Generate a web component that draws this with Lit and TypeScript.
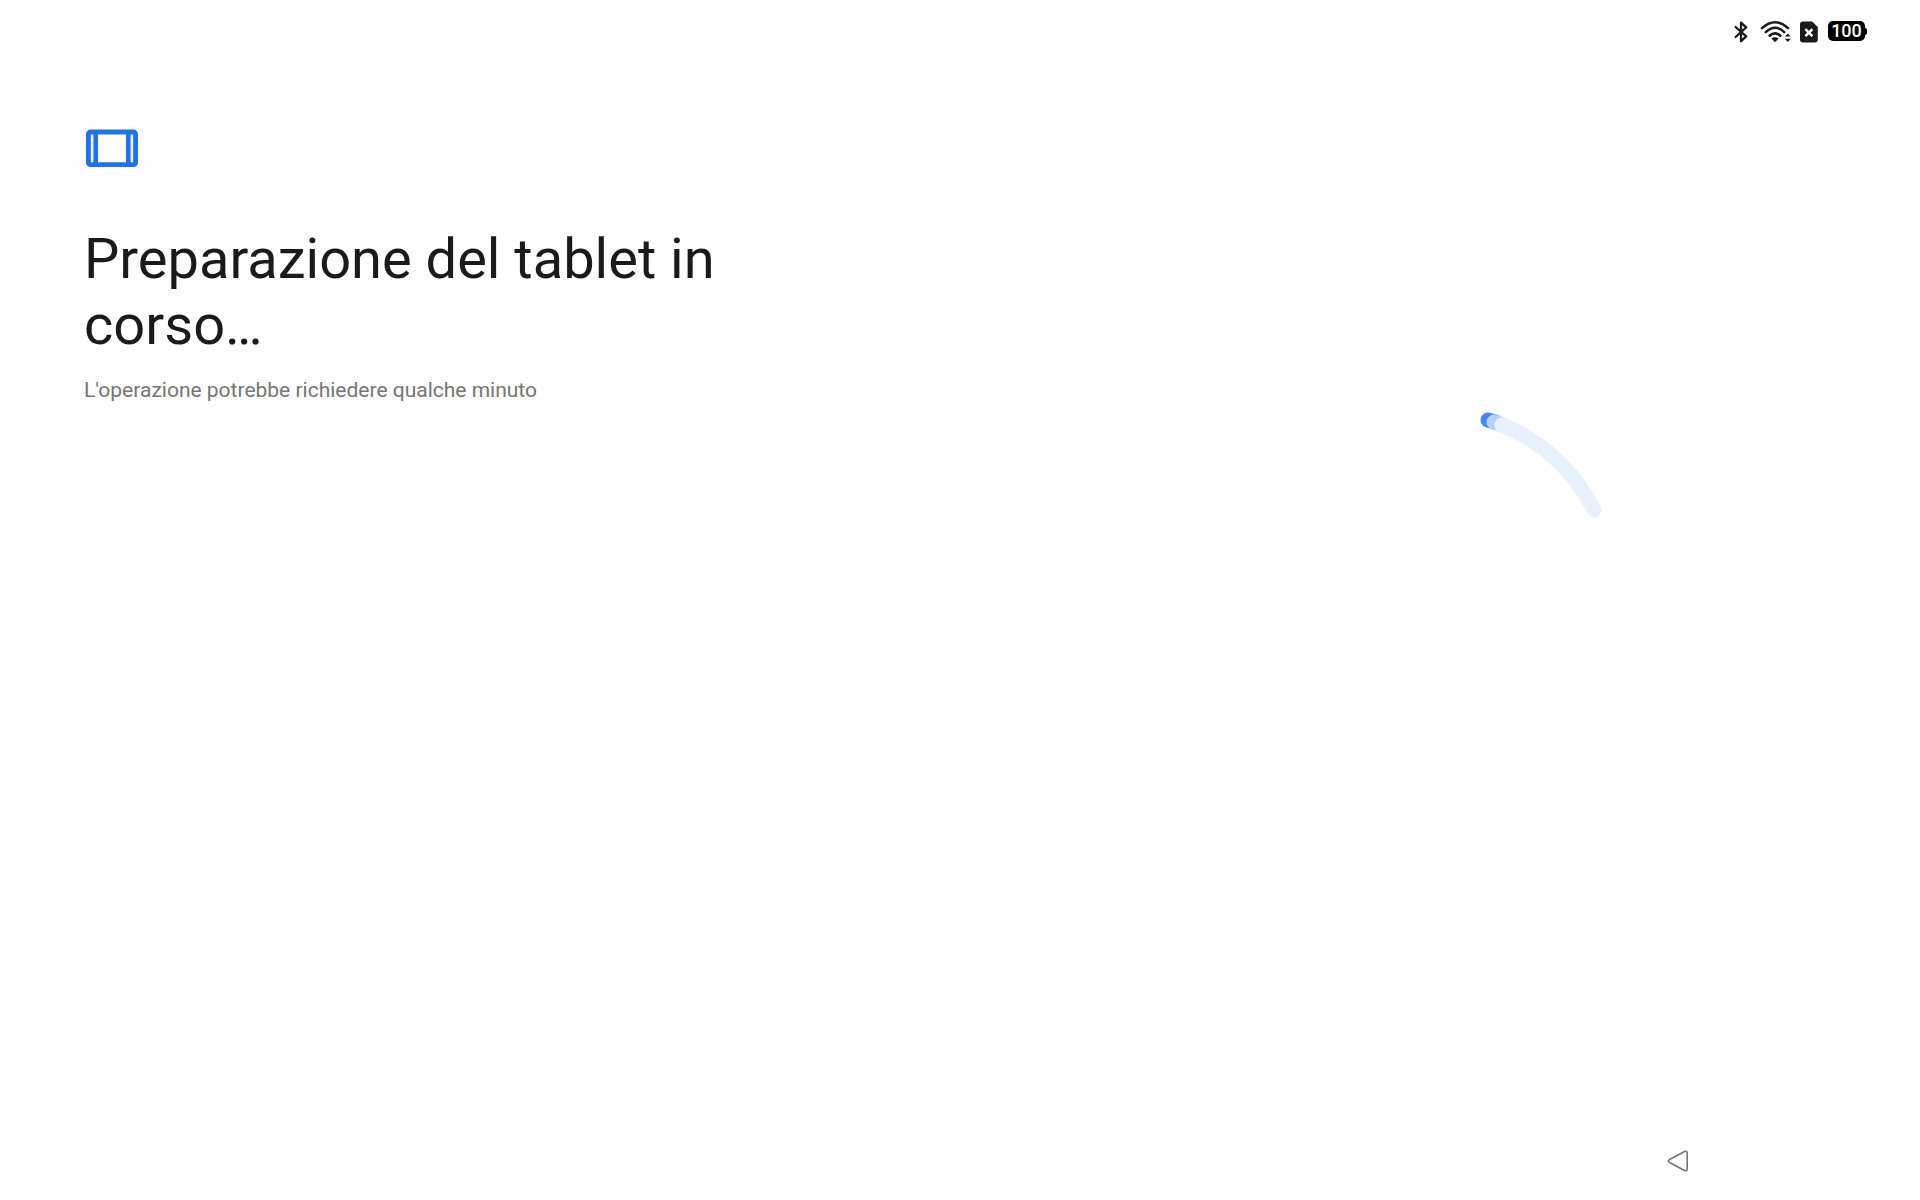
import { LitElement, html, css } from "lit";
import { customElement, property } from "lit/decorators.js";

@customElement("status-bar")
class StatusBar extends LitElement {
  @property({ type: Number }) battery = 100;

  static styles = css`
    :host {
      display: flex;
      align-items: center;
      justify-content: flex-end;
      height: 62px;
      padding-right: 53px;
      box-sizing: border-box;
      color: #1a1a1a;
    }
    svg {
      display: block;
      flex: none;
      overflow: visible;
    }
    .bluetooth {
      margin-right: 12px;
    }
    .wifi {
      margin-right: 9px;
    }
    .sim {
      margin-right: 10px;
    }
    .battery {
      display: flex;
      align-items: center;
    }
    .level {
      width: 37px;
      height: 20px;
      border-radius: 5px;
      background: #000;
      color: #fff;
      font: 500 18px/20px Roboto, sans-serif;
      text-align: center;
    }
    .tip {
      width: 2px;
      height: 7px;
      border-radius: 0 2px 2px 0;
      background: #000;
    }
  `;

  render() {
    return html`
      <svg class="bluetooth" width="14" height="22" viewBox="0 -1 14 22" role="img" aria-label="Bluetooth">
        <path d="M1.6 6 12.2 15.4 7 20.2V1.6l5.2 4.8L1.6 16" fill="none" stroke="currentColor" stroke-width="2.3" stroke-linejoin="round" stroke-linecap="round" />
      </svg>
      <svg class="wifi" width="31" height="22" viewBox="0 -1 31 22" role="img" aria-label="Wi-Fi">
        <g fill="none" stroke="currentColor" stroke-width="2.5" stroke-linecap="round">
          <path d="M2 7.2Q15 -4.8 28 7.2" />
          <path d="M5.8 11.1Q15 2.5 24.2 11.1" />
          <path d="M9.6 14.7Q15 10 20.4 14.7" />
        </g>
        <path d="M11.4 17.6Q15 14.8 18.6 17.6L15.8 20.6Q15 21.4 14.2 20.6Z" fill="currentColor" />
        <path d="M24.8 15.6 27.8 12.4 30.8 15.6ZM24.8 17.8H30.8L27.8 21Z" fill="currentColor" />
      </svg>
      <svg class="sim" width="18" height="22" viewBox="0 -1 18 22" role="img" aria-label="SIM">
        <path d="M3 .5H12L17.8 6V18.4A3 3 0 0 1 14.8 21.4H3A3 3 0 0 1 0 18.4V3.5A3 3 0 0 1 3 .5Z" fill="currentColor" />
        <path d="M5.4 8.1 12.4 15.1M12.4 8.1 5.4 15.1" stroke="#fff" stroke-width="2.5" />
      </svg>
      <div class="battery">
        <span class="level">${this.battery}</span>
        <span class="tip"></span>
      </div>
    `;
  }
}

@customElement("progress-arc")
class ProgressArc extends LitElement {
  static styles = css`
    :host {
      display: block;
    }
    svg {
      display: block;
    }
    path {
      fill: none;
      stroke-width: 15;
      stroke-linecap: round;
    }
    .head {
      stroke: #4786ec;
    }
    .middle {
      stroke: #b7d1fa;
    }
    .tail {
      stroke: #e8f0fe;
    }
  `;

  render() {
    return html`
      <svg width="368" height="368" viewBox="-181 -184 368 368" role="progressbar" aria-label="Preparazione">
        <path class="head" d="M51-168A176 176 0 0 1 58-166" />
        <path class="middle" d="M57-166A176 176 0 0 1 66-163" />
        <path class="tail" d="M65-163A176 176 0 0 1 157-78" />
      </svg>
    `;
  }
}

@customElement("app-root")
class AppRoot extends LitElement {
  static styles = css`
    :host {
      display: flex;
      flex-direction: column;
      min-height: 100vh;
      background: #fefefe;
      font-family: Roboto, sans-serif;
    }
    main {
      flex: 1;
      display: grid;
      grid-template-columns: 1fr 1fr;
    }
    .intro {
      padding: 67px 168px 0 84px;
    }
    .device {
      display: block;
      margin-bottom: 57px;
    }
    h1 {
      margin: 0;
      color: #1a1a1a;
      font-size: 56px;
      font-weight: 400;
      line-height: 66px;
    }
    p {
      margin: 19px 0 0;
      color: #757575;
      font-size: 21px;
      line-height: 26px;
    }
    .progress {
      display: grid;
      place-items: center;
      padding-bottom: 8px;
    }
    nav {
      display: flex;
      justify-content: flex-end;
      align-items: center;
      height: 78px;
      padding-right: 218px;
    }
    button {
      display: grid;
      place-items: center;
      width: 48px;
      height: 48px;
      padding: 0;
      border: 0;
      background: none;
      color: #757575;
    }
  `;

  render() {
    return html`
      <status-bar></status-bar>
      <main>
        <section class="intro">
          <svg class="device" width="56" height="40" viewBox="0 0 56 40" aria-hidden="true">
            <rect x="4" y="3" width="48" height="33" fill="#e8f0fe" />
            <rect x="12" y="4" width="32" height="31" fill="#fefefe" />
            <path d="M11.7 3.5V35.5M44.3 3.5V35.5" stroke="#1f73e2" stroke-width="4.6" />
            <rect x="4.4" y="3" width="47.2" height="32.6" rx="2" fill="none" stroke="#1f73e2" stroke-width="4.8" />
          </svg>
          <h1>Preparazione del tablet in corso…</h1>
          <p>L'operazione potrebbe richiedere qualche minuto</p>
        </section>
        <section class="progress">
          <progress-arc></progress-arc>
        </section>
      </main>
      <nav>
        <button type="button" aria-label="Indietro">
          <svg width="22" height="24" viewBox="0 0 22 24">
            <path d="M2.2 10.8 17.6 2.6Q20.2 1.6 20.2 4.2V19.8Q20.2 22.4 17.6 21.4L2.2 13.2Q.4 12 2.2 10.8Z" fill="none" stroke="currentColor" stroke-width="1.6" />
          </svg>
        </button>
      </nav>
    `;
  }
}
